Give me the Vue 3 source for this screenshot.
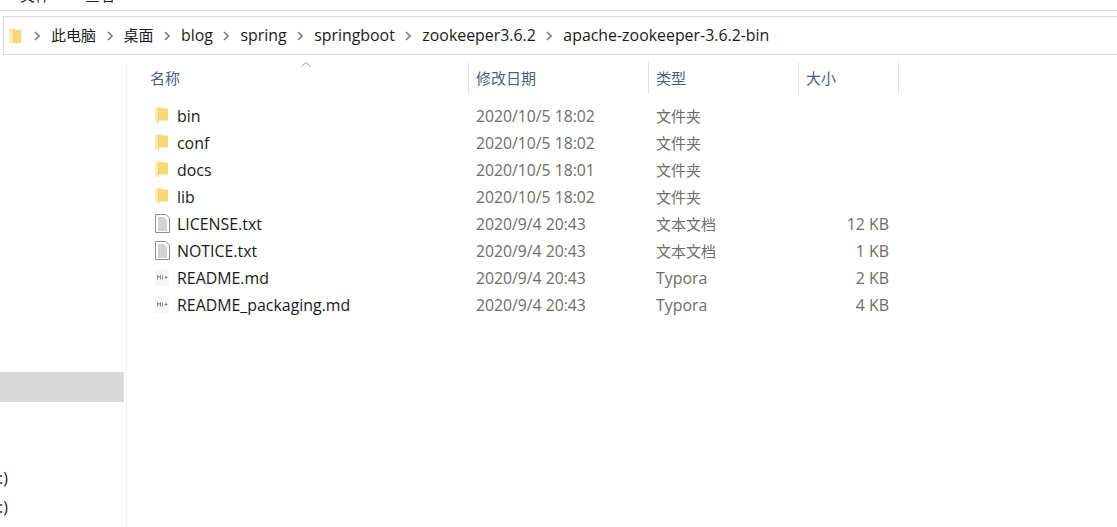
<script setup>
const crumbs = [
  { t: '此电脑', cjk: true },
  { t: '桌面', cjk: true },
  { t: 'blog' },
  { t: 'spring' },
  { t: 'springboot' },
  { t: 'zookeeper3.6.2' },
  { t: 'apache-zookeeper-3.6.2-bin' }
]
const columns = [
  { label: '名称', cls: 'c-name' },
  { label: '修改日期', cls: 'c-date' },
  { label: '类型', cls: 'c-type' },
  { label: '大小', cls: 'c-size' }
]
const rows = [
  { name: 'bin', icon: 'folder', date: '2020/10/5 18:02', type: '文件夹', cjk: true, size: '' },
  { name: 'conf', icon: 'folder', date: '2020/10/5 18:02', type: '文件夹', cjk: true, size: '' },
  { name: 'docs', icon: 'folder', date: '2020/10/5 18:01', type: '文件夹', cjk: true, size: '' },
  { name: 'lib', icon: 'folder', date: '2020/10/5 18:02', type: '文件夹', cjk: true, size: '' },
  { name: 'LICENSE.txt', icon: 'text', date: '2020/9/4 20:43', type: '文本文档', cjk: true, size: '12 KB' },
  { name: 'NOTICE.txt', icon: 'text', date: '2020/9/4 20:43', type: '文本文档', cjk: true, size: '1 KB' },
  { name: 'README.md', icon: 'md', date: '2020/9/4 20:43', type: 'Typora', size: '2 KB' },
  { name: 'README_packaging.md', icon: 'md', date: '2020/9/4 20:43', type: 'Typora', size: '4 KB' }
]
</script>

<template>
  <div class="window">
    <div class="ribbon"><span class="ribbon-text">文件</span><span class="ribbon-text second">查看</span></div>
    <div class="address">
      <svg class="addr-folder" width="12" height="17" viewBox="0 0 12 17">
        <path d="M2 1h3l1 1h6v13H2z" fill="#f8d775" />
        <path d="M0 .5l4 2V16.500L0 14.500z" fill="#fcebb6" />
      </svg>
      <template v-for="c in crumbs" :key="c.t">
        <svg class="chev" width="6" height="10" viewBox="0 0 6 10">
          <path d="M1 1l4 4-4 4" fill="none" stroke="#7f7f7f" stroke-width="1.600" />
        </svg>
        <span class="crumb" :class="{ cjk: c.cjk }">{{ c.t }}</span>
      </template>
    </div>
    <div class="main">
      <aside class="sidebar">
        <div class="selected"></div>
        <div class="drive first">:)</div>
        <div class="drive">:)</div>
      </aside>
      <section class="list">
        <svg class="sort" width="10" height="5" viewBox="0 0 10 5">
          <path d="M.5 4.500L5 .5l4.500 4" fill="none" stroke="#9a9a9a" />
        </svg>
        <div class="head">
          <div v-for="c in columns" :key="c.label" class="hcell" :class="c.cls">{{ c.label }}</div>
        </div>
        <div class="rows">
          <div v-for="r in rows" :key="r.name" class="row">
            <div class="c-name namecell">
              <svg v-if="r.icon === 'folder'" class="icon" width="16" height="17" viewBox="0 0 16 17">
                <path d="M2 .5h4l1 1h6V13.500H2z" fill="#f9d876" />
                <path d="M0 .5l3.500 1.500V16.500L0 14.500z" fill="#fcebb6" />
                <path d="M3.500 2V16.500" stroke="#e8c465" stroke-width=".6" />
              </svg>
              <svg v-else-if="r.icon === 'text'" class="icon" width="16" height="19" viewBox="0 0 16 19">
                <path d="M.5.5h10.500l3.500 3.500v14.500H.5z" fill="#fff" stroke="#8f8f8f" />
                <path d="M3 4h7M3 6h9M3 8h9M3 10h9M3 12h9M3 14h9M3 16h9" stroke="#a6a6a6" />
              </svg>
              <svg v-else class="icon" width="16" height="17" viewBox="0 0 16 17">
                <path d="M0 0h11l3 3v14H0z" fill="#f6f6f6" />
                <path d="M2.500 10.500V6.500l1.500 2 1.500-2v4M7.500 6.500v4M9.500 8.500h3M11 7v3" fill="none" stroke="#8c8c8c" />
              </svg>
              <span class="fname">{{ r.name }}</span>
            </div>
            <div class="c-date meta date">{{ r.date }}</div>
            <div class="c-type meta" :class="{ cjk: r.cjk }">{{ r.type }}</div>
            <div class="c-size meta size">{{ r.size }}</div>
          </div>
        </div>
      </section>
    </div>
  </div>
</template>

<style>
html, body { margin: 0; background: #fff; overflow: hidden; }
</style>

<style scoped>
.window {
  width: 1117px;
  height: 527px;
  overflow: hidden;
  background: #fff;
  display: flex;
  flex-direction: column;
  font-family: "Open Sans", "Noto Sans CJK SC", sans-serif;
  font-size: 15.9px;
  color: #1a1a1a;
}
.ribbon {
  height: 10px;
  flex: none;
  border-bottom: 1px solid #dcdcdc;
  overflow: hidden;
  display: flex;
  padding-left: 20px;
  gap: 35px;
}
.ribbon-text { font-size: 15px; line-height: 15px; margin-top: -12px; color: #222; }
.address {
  margin: 5px 0 0 3px;
  height: 37px;
  flex: none;
  border: 1px solid #d9d9d9;
  border-right: none;
  display: flex;
  align-items: center;
  padding-left: 5px;
}
.addr-folder { flex: none; margin: 1px 2.500px 0 0; }
.chev { flex: none; margin: 0 11px 0 10.500px; }
.crumb { white-space: nowrap; position: relative; top: -1px; }
.cjk { font-size: 15px; }
.main { flex: 1; display: flex; min-height: 0; margin-top: 7px; }
.sidebar {
  width: 126px;
  flex: none;
  border-right: 1px solid #f2f2f2;
  display: flex;
  flex-direction: column;
}
.selected { margin-top: 310px; height: 30px; width: 124px; background: #d9d9d9; }
.drive { line-height: 30px; height: 30px; margin-left: -1px; }
.drive.first { margin-top: 61px; margin-bottom: -1px; }
.list { flex: 1; position: relative; }
.sort { position: absolute; left: 174px; top: 0; }
.head { display: flex; height: 32px; }
.hcell {
  box-sizing: border-box;
  border-right: 1px solid #e5e5e5;
  padding-left: 7px;
  line-height: 32px;
  color: #4c607a;
  font-size: 15px;
}
.c-name { width: 342px; flex: none; box-sizing: border-box; }
.c-date { width: 180px; flex: none; box-sizing: border-box; }
.c-type { width: 150px; flex: none; box-sizing: border-box; }
.c-size { width: 100px; flex: none; box-sizing: border-box; }
.head .c-name { padding-left: 23px; }
.rows { margin-top: 8px; }
.row { display: flex; height: 27px; align-items: center; }
.namecell { display: flex; align-items: center; padding-left: 28px; }
.icon { flex: none; margin-right: 6px; }
.fname { white-space: nowrap; }
.meta { padding-left: 7px; color: #6d6d6d; }
.date { font-size: 15.75px; }
.size { text-align: right; padding-right: 10px; }
</style>
